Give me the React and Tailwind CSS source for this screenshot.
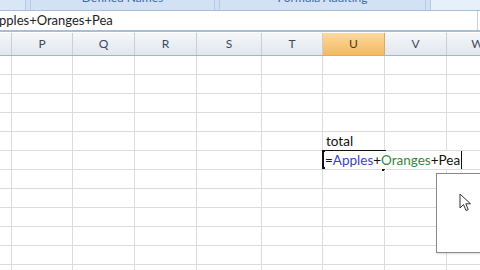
import React from "react";

const cols = [
  { label: "", w: 12 },
  { label: "P", w: 61 },
  { label: "Q", w: 62 },
  { label: "R", w: 62 },
  { label: "S", w: 65 },
  { label: "T", w: 61 },
  { label: "U", w: 62, active: true },
  { label: "V", w: 62 },
  { label: "W", w: 62 },
];

const rowCount = 12;

function App() {
  return (
    <div
      className="relative w-[480px] h-[270px] overflow-hidden bg-white"
      style={{ fontFamily: "Lato, 'Noto Sans', sans-serif" }}
    >
      {/* ribbon group labels */}
      <div className="flex h-[11px] bg-[#cfe0f4] border-b border-[#a7bfdc] gap-[4px] overflow-hidden">
        <div className="w-[26px] bg-[#d9e6f5] border-r border-[#b5cbe6]" />
        <div className="w-[185px] bg-[#d2e2f4] border-x border-[#b5cbe6] flex justify-center overflow-hidden">
          <span className="text-[12px] leading-none text-[#3e6aaa] -mt-[8px] whitespace-nowrap">Defined Names</span>
        </div>
        <div className="w-[207px] bg-[#d2e2f4] border-x border-[#b5cbe6] flex justify-center overflow-hidden">
          <span className="text-[12px] leading-none text-[#3e6aaa] -mt-[8px] whitespace-nowrap">Formula Auditing</span>
        </div>
        <div className="flex-1 bg-[#e6f0fa] border-l border-[#b5cbe6]" />
      </div>

      {/* formula bar */}
      <div className="flex h-[21px] items-center border-b-2 border-[#a9bed6] bg-white">
        <div className="flex-1 text-[13px] text-[#222] leading-none whitespace-nowrap -ml-[1px]">
          pples+Oranges+Pea
        </div>
        <div className="w-[3px] h-full border-l border-[#c6d2df]" />
      </div>

      {/* column headers */}
      <div className="flex h-[23px] border-b border-[#9eb6ce] mt-[1px]">
        {cols.map((c, i) => (
          <div
            key={i}
            style={{ width: c.w }}
            className={
              "shrink-0 flex items-center justify-center text-[12px] border-r " +
              (c.active
                ? "bg-gradient-to-b from-[#fbd9a0] to-[#f5b95c] text-[#4a3a10] border-[#e5a94c]"
                : "bg-gradient-to-b from-[#f5f7fa] to-[#e1e7ee] text-[#3b4a5c] border-[#c5d0dc]")
            }
          >
            {c.label}
          </div>
        ))}
      </div>

      {/* grid */}
      <div className="flex flex-col">
        {Array.from({ length: rowCount }).map((_, r) => (
          <div key={r} className="flex h-[19px] border-b border-[#dadcdf]">
            {cols.map((c, i) => {
              const isTotal = r === 4 && c.label === "U";
              const isEdit = r === 5 && c.label === "U";
              return (
                <div
                  key={i}
                  style={{ width: c.w }}
                  className="shrink-0 relative border-r border-[#dadcdf]"
                >
                  {isTotal && (
                    <span className="absolute left-[3px] top-[0px] text-[13.5px] leading-[18px] text-[#111]">total</span>
                  )}
                  {isEdit && (
                    <>
                      <div className="absolute -left-[1px] -top-[1px] w-[64px] h-[19px] border-2 border-[#111]" />
                      <div className="absolute right-[-2px] bottom-[-3px] w-[5px] h-[5px] bg-[#111] border border-white" />
                      <span className="absolute left-[2px] top-[0px] z-10 text-[13.5px] leading-[18px] whitespace-nowrap bg-white pr-[1px] border-r border-[#111]">
                        <span className="text-[#111]">=</span>
                        <span className="text-[#3c3ccf]">Apples</span>
                        <span className="text-[#111]">+</span>
                        <span className="text-[#2f8a3a]">Oranges</span>
                        <span className="text-[#111]">+Pea</span>
                      </span>
                    </>
                  )}
                </div>
              );
            })}
          </div>
        ))}
      </div>

      {/* popup box over the grid */}
      <div className="absolute left-[436px] top-[173px] w-[50px] h-[80px] bg-white border border-[#8a8a8a] shadow-[1px_1px_2px_rgba(0,0,0,0.15)]">
        <svg className="absolute left-[22px] top-[19px]" width="14" height="20" viewBox="0 0 14 20">
          <path
            d="M1 1 L1 15 L4.5 11.5 L7 17.5 L9.2 16.5 L6.8 10.8 L11.5 10.8 Z"
            fill="white"
            stroke="#333"
            strokeWidth="1"
            strokeLinejoin="round"
          />
        </svg>
      </div>
    </div>
  );
}

export default App;
